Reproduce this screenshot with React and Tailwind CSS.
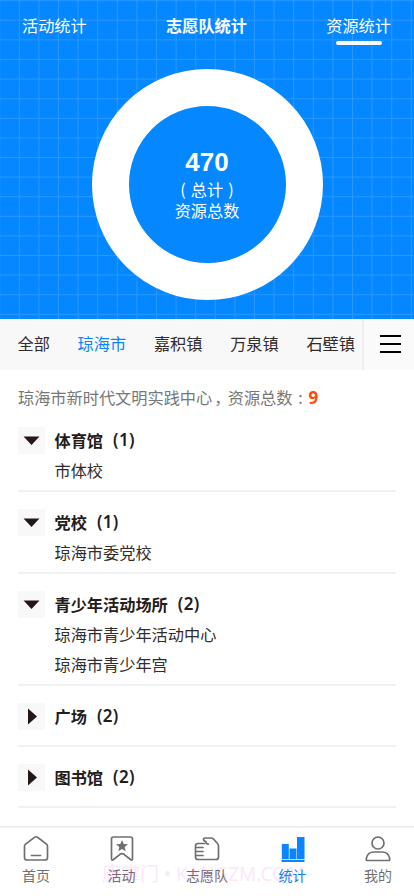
import React from "react";

const groups = [
  { name: "体育馆", count: 1, items: ["市体校"], height: "h-[82px]" },
  { name: "党校", count: 1, items: ["琼海市委党校"], height: "h-[82px]" },
  { name: "青少年活动场所", count: 2, items: ["琼海市青少年活动中心", "琼海市青少年宫"], height: "h-[112px]" },
  { name: "广场", count: 2, items: [], height: "h-[61px]" },
  { name: "图书馆", count: 2, items: [], height: "h-[61px]" },
];

function Grid() {
  return (
    <svg className="absolute inset-0 h-full w-full" aria-hidden="true">
      <defs>
        <pattern id="grid" x="18.8" y="0.2" width="19.6" height="19.6" patternUnits="userSpaceOnUse">
          <path d="M0.5 0V19.6M0 0.5H19.6" stroke="#fff" strokeOpacity="0.14" strokeWidth="1" />
        </pattern>
      </defs>
      <rect width="100%" height="100%" fill="url(#grid)" />
    </svg>
  );
}

function Group({ name, count, items, height }) {
  return (
    <section className={`${height} flex flex-none gap-[9.500px] border-b-2 border-[#f1f1f1]`}>
      <div className="mt-[17px] flex h-[27px] w-[27px] items-center justify-center bg-[#f8f8f8]">
        <svg width="17" height="17" viewBox="0 0 17 17" fill="#231815">
          {items.length ? <path d="M.5 4.500h16L8.500 13z" /> : <path d="M5 .5v16L14 8.500z" />}
        </svg>
      </div>
      <div className="pt-[15px] leading-[30px] text-[#332c2b]">
        <h2 className="flex gap-[10px] font-bold whitespace-nowrap text-[#231c1b]">
          {name}
          <span className="font-['Noto_Sans',sans-serif] text-[17px] font-semibold tracking-[0.300px]">({count})</span>
        </h2>
        {items.map((item) => (
          <p key={item}>{item}</p>
        ))}
      </div>
    </section>
  );
}

function Tab({ label, active, children }) {
  return (
    <div className={`flex w-[72px] flex-col items-center ${active ? "text-[#0a84ff]" : "text-[#6f6f6f]"}`}>
      <svg width="28" height="28" viewBox="0 0 28 28" fill="none" stroke="currentColor" strokeWidth="1.700" strokeLinejoin="round" strokeLinecap="round">
        {children}
      </svg>
      <span className="mt-[3px] text-[14px] leading-[18px]">{label}</span>
    </div>
  );
}

export default function App() {
  return (
    <div className="relative flex h-[896px] w-[414px] flex-col overflow-hidden bg-white font-['Noto_Sans_CJK_SC',sans-serif] text-[16.200px]">
      <header className="relative h-[319px] flex-none bg-[#0587ff] text-white">
        <Grid />
        <nav className="relative flex h-[48px] justify-between pt-[13px] pr-[23px] pl-[22px] leading-[24px]">
          <span>活动统计</span>
          <span className="font-bold">志愿队统计</span>
          <span className="flex flex-col items-center">
            资源统计
            <i className="mt-[4px] h-[4px] w-[46px] flex-none rounded-full bg-white" />
          </span>
        </nav>
        <div className="relative mx-auto mt-[21px] flex h-[231px] w-[231px] flex-col items-center rounded-full border-[37px] border-white bg-[#0587ff] pt-[41px]">
          <strong className="font-['Liberation_Sans',sans-serif] text-[26px] leading-[30px]">470</strong>
          <span className="mt-[2px] flex gap-[5px] leading-[21px] whitespace-nowrap">
            <span>(</span>
            <span>总计</span>
            <span>)</span>
          </span>
          <span className="leading-[21px]">资源总数</span>
        </div>
      </header>
      <nav className="flex h-[51px] flex-none bg-[#f8f8f8] leading-[49px] text-[#332c2b]">
        <div className="flex w-[362px] justify-between pr-[7px] pl-[17.500px] whitespace-nowrap">
          <span>全部</span>
          <span className="text-[#0a84ff]">琼海市</span>
          <span>嘉积镇</span>
          <span>万泉镇</span>
          <span>石壁镇</span>
        </div>
        <button className="flex flex-1 flex-col items-center justify-center gap-[6px] border-l-2 border-[#eeeeee] bg-[#fafafa] pb-[2px] pl-[3px]" aria-label="菜单">
          <i className="h-[2px] w-[21px] bg-black" />
          <i className="h-[2px] w-[21px] bg-black" />
          <i className="h-[2px] w-[21px] bg-black" />
        </button>
      </nav>
      <main className="flex flex-1 flex-col overflow-hidden px-[18px]">
        <p className="mt-[12px] flex h-[28px] flex-none leading-[31px] whitespace-nowrap text-[#777]">
          <span>琼海市新时代文明实践中心</span>
          <span className="w-[15.500px] pl-[2px]">，</span>
          <span>资源总数</span>
          <span className="w-[16px] text-center">:</span>
          <b className="font-['Noto_Sans',sans-serif] text-[17px] text-[#ff4a0a]">9</b>
        </p>
        {groups.map((g) => (
          <Group key={g.name} {...g} />
        ))}
      </main>
      <footer className="relative flex h-[70px] flex-none justify-between border-t-2 border-[#eeeeee] bg-white pt-[7px]">
        <Tab label="首页">
          <path d="M2.500 11.300Q2.500 10 3.500 9.200L12.500 2.300Q14 1.200 15.500 2.300L24.500 9.200Q25.500 10 25.500 11.300V22.500Q25.500 25 23 25H5Q2.500 25 2.500 22.500ZM9.500 20.500H18.500" />
        </Tab>
        <Tab label="活动">
          <path d="M3.500 4Q3.500 2 5.500 2H22.500Q24.500 2 24.500 4V23.500Q24.500 26 22.500 24.500L16 19.300Q14 17.800 12 19.300L5.500 24.500Q3.500 26 3.500 23.500Z" />
          <path fill="currentColor" stroke="none" d="M14 5l1.700 4 4.300.3-3.300 2.800 1 4.200-3.700-2.200-3.700 2.200 1-4.200-3.300-2.800 4.300-.3z" />
        </Tab>
        <Tab label="志愿队">
          <path d="M11.500 8.500H5Q2.500 8.500 2.500 11V22Q2.500 24.500 5 24.500H23Q25.500 24.500 25.500 22V11Q25.500 9.500 24.500 8.500L20.500 4Q19.500 3 18 3H12.500Q10.500 3 10.500 4.500Q10.500 6 13 6.500Q12.500 9 15.500 9M3 12.500H10M3 16.500H10M3 20.500H10" />
        </Tab>
        <Tab label="统计" active>
          <path fill="currentColor" stroke="none" d="M2.800 9h7v15h-7zM10.500 13.500h7V24h-7zM18 2h7.500v22H18zM2.500 24.700h23V27h-23z" />
        </Tab>
        <Tab label="我的">
          <circle cx="14" cy="8" r="6" />
          <path d="M3.500 25.500Q2 25.500 2.300 23.500Q3.500 17 10 17H18Q24.500 17 25.700 23.500Q26 25.500 24.500 25.500Z" />
        </Tab>
        <span className="pointer-events-none absolute top-[33px] left-[102px] font-['Noto_Sans','Noto_Sans_CJK_SC',sans-serif] text-[19px] leading-[26px] whitespace-nowrap text-[#e815c8] opacity-10">康掌门 • KANGZM.COM</span>
      </footer>
    </div>
  );
}
